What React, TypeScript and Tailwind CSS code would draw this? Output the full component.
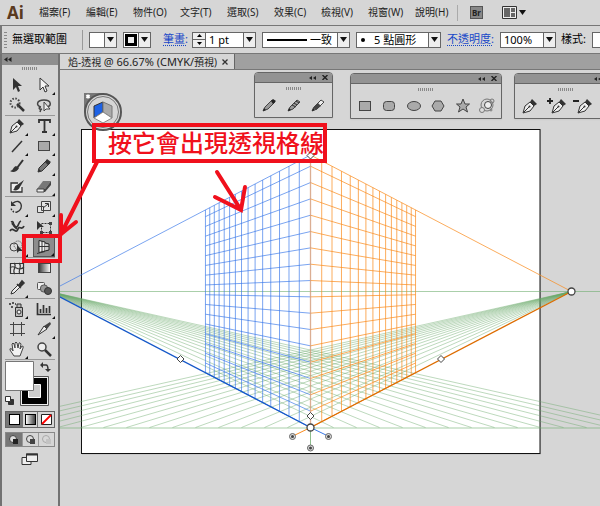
import React, { useState } from 'react';

const LEFT_VP = 49.5;
const RIGHT_VP = 571.5;
const HORIZON = 291.5;
const CENTER = 310.5;
const GROUND = 427.5;

const menus = ['檔案(F)', '編輯(E)', '物件(O)', '文字(T)', '選取(S)', '效果(C)', '檢視(V)', '視窗(W)', '說明(H)'];

interface ToolItem {
  name: string;
  more?: boolean;
  icon: React.ReactNode;
}

const penNib = (
  <>
    <path d="M2 16 L4 9 L9 5 L13 9 L9 14 Z M2.500 15.500 L8 10" fill="#eee" stroke="#333" />
    <circle cx="8.500" cy="9.500" r="1" fill="#333" />
    <path d="M9 5 L11 2 L16 7 L13 9 Z" fill="#333" />
  </>
);

const toolGroups: ToolItem[][] = [
  [
    { name: 'Selection', icon: <path d="M5 2 L5 14 L8 11 L10 16 L12 15 L10 10 L14 10 Z" fill="#333" /> },
    { name: 'Direct Selection', more: true, icon: <path d="M5 2 L5 14 L8 11 L10 16 L12 15 L10 10 L14 10 Z" fill="#f4f4f4" stroke="#333" /> },
    {
      name: 'Magic Wand',
      icon: (
        <>
          <path d="M9 8 L16 15" stroke="#333" strokeWidth="2.500" />
          <circle cx="7" cy="7" r="4.500" fill="none" stroke="#444" strokeWidth="2" strokeDasharray="1.500 1.500" />
        </>
      ),
    },
    {
      name: 'Lasso',
      icon: (
        <>
          <path d="M6 11 C1 10 1 4 9 4 C17 4 17 11 11 11 M6 11 C3 11 4 14 7 13 M6 13 L5 16" fill="none" stroke="#444" strokeWidth="1.500" />
          <path d="M9 6 L9 15 L11 13 L15 13 Z" fill="#eee" stroke="#444" />
        </>
      ),
    },
  ],
  [
    { name: 'Pen', more: true, icon: penNib },
    { name: 'Type', more: true, icon: <path d="M4 6 V3 H15 V6 M9.500 3 V15 M7 15 H12" fill="none" stroke="#333" strokeWidth="1.800" /> },
    { name: 'Line', more: true, icon: <path d="M4 15 L14 4" stroke="#333" strokeWidth="1.500" /> },
    { name: 'Rectangle', more: true, icon: <rect x="3.500" y="4.500" width="11" height="9" fill="#aaa" stroke="#444" /> },
    {
      name: 'Paintbrush',
      icon: (
        <>
          <path d="M15 3 L9 11" stroke="#333" strokeWidth="2" />
          <path d="M2 14 C5 14 5 10 8 9 L11 11 C9 15 5 16 2 14 Z" fill="#333" />
        </>
      ),
    },
    {
      name: 'Pencil',
      more: true,
      icon: (
        <>
          <path d="M3 15 L4 11 L12 3 L15 6 L7 14 Z" fill="#777" stroke="#333" />
          <path d="M10 5 L12 2 L16 5 L13 8 Z M3 15 L4 12 L6 14 Z" fill="#333" />
        </>
      ),
    },
    {
      name: 'Blob Brush',
      icon: (
        <>
          <path d="M10 6 H3 V15 H14 V10" fill="#eee" stroke="#333" strokeWidth="1.300" />
          <path d="M5 13 C7 12 6 9 9 8 L16 3 L12 10 C11 13 8 14 5 13 Z" fill="#333" />
        </>
      ),
    },
    {
      name: 'Eraser',
      more: true,
      icon: (
        <>
          <path d="M2 12 L8 4 H16 L10 12 Z" fill="#777" />
          <path d="M2 12 H10 L16 4 V8 L10 15 H2 Z" fill="#444" />
          <path d="M2 12 H9 V15 H2 Z" fill="#eee" stroke="#444" />
        </>
      ),
    },
  ],
  [
    {
      name: 'Rotate',
      more: true,
      icon: (
        <>
          <path d="M5 5 C13 -1 17 11 9 14" fill="none" stroke="#333" strokeWidth="1.400" />
          <path d="M9 14 C5 15 3 12 3 9" fill="none" stroke="#333" strokeWidth="1.500" strokeDasharray="1.500 1.500" />
          <path d="M3 3 V8 H8 Z" fill="#333" />
        </>
      ),
    },
    {
      name: 'Scale',
      more: true,
      icon: (
        <>
          <path d="M6.500 3.500 H15.500 V12.500 H6.500 Z M2.500 8.500 H8.500 V14.500 H2.500 Z" fill="#e4e4e4" stroke="#444" />
          <path d="M8 10 L13 6 M10 5.500 H13.500 V9" fill="none" stroke="#333" />
        </>
      ),
    },
    {
      name: 'Width',
      more: true,
      icon: (
        <>
          <path d="M2 13 C5 8 8 17 10 11 C11 7 14 13 16 8 M3 4 C7 2 4 9 8 9 C11 9 10 4 13 3" fill="none" stroke="#333" strokeWidth="1.700" />
          <path d="M4 5 L9 11" stroke="#333" strokeWidth="2" />
        </>
      ),
    },
    {
      name: 'Free Transform',
      icon: (
        <>
          <path d="M6.500 5.500 H15.500 V14.500 H6.500 Z" fill="none" stroke="#333" strokeDasharray="2 1" />
          <path d="M2 3 V12 L5 9 L9 9 Z" fill="#333" />
          <path d="M14 4 h3 v3 h-3 Z M14 13 h3 v3 h-3 Z M5 13 h3 v3 h-3 Z" fill="#444" />
        </>
      ),
    },
    {
      name: 'Shape Builder',
      more: true,
      icon: (
        <>
          <circle cx="6" cy="9" r="4" fill="#ddd" stroke="#444" />
          <circle cx="10" cy="7" r="4" fill="none" stroke="#444" strokeDasharray="1 1" />
          <path d="M9 7 V15 L11 13 H15 Z" fill="#333" />
        </>
      ),
    },
    {
      name: 'Perspective Grid',
      more: true,
      icon: (
        <>
          <path d="M4 2.500 L10 4 V13 L4 14.500 Z" fill="#f2f2f2" stroke="#222" />
          <path d="M10 5 L14 6 V12 L10 13" fill="#ccc" stroke="#222" />
          <path d="M4 8.500 H14 M7 3 V14 M2 15.500 L10 13.500" fill="none" stroke="#333" />
        </>
      ),
    },
  ],
  [
    {
      name: 'Mesh',
      icon: (
        <path
          d="M2.500 4.500 H15.500 V14.500 H2.500 Z M2 9 C6 4 10 14 16 8 M6 4 C10 8 3 11 7 15 M11 4 C15 8 9 11 12 15"
          fill="#e4e4e4"
          stroke="#333"
          strokeWidth="1.200"
        />
      ),
    },
    { name: 'Gradient', icon: <rect x="3.500" y="4.500" width="12" height="9" fill="url(#gradTool)" stroke="#444" /> },
    {
      name: 'Eyedropper',
      more: true,
      icon: (
        <>
          <path d="M3 15 L4 12 L10 6 L12 8 L6 14 Z" fill="#eee" stroke="#333" />
          <path d="M9 5 L13 9 M11 6 L14 2 L16 4 L12 8 Z" fill="#333" stroke="#333" strokeWidth="1.500" />
        </>
      ),
    },
    {
      name: 'Blend',
      icon: (
        <>
          <rect x="2.500" y="3.500" width="7" height="7" rx="1" fill="#eee" stroke="#555" />
          <rect x="5.500" y="6" width="7" height="7" rx="3" fill="#999" stroke="#555" />
          <circle cx="13" cy="12" r="3.500" fill="#555" stroke="#333" />
        </>
      ),
    },
  ],
  [
    {
      name: 'Symbol Sprayer',
      more: true,
      icon: (
        <>
          <path d="M7.500 7.500 H14.500 V16.500 H7.500 Z M9 7 V4 H13 V7" fill="#bbb" stroke="#333" />
          <circle cx="11" cy="12" r="2" fill="#eee" stroke="#333" />
          <path d="M1 3 h2 v2 h-2 Z M4 2 h2 v2 h-2 Z M3 6 h2 v2 h-2 Z M7 3 h1 v2 h-1 Z" fill="#555" />
        </>
      ),
    },
    { name: 'Column Graph', more: true, icon: <path d="M2.500 3 V14.500 H16 M5.500 13 V9 M8.500 13 V5 M11.500 13 V8 M14.500 13 V6" fill="none" stroke="#333" strokeWidth="1.700" /> },
    { name: 'Artboard', icon: <path d="M5.500 2 V16 M13.500 2 V16 M2 4.500 H17 M2 13.500 H17" fill="none" stroke="#444" /> },
    {
      name: 'Slice',
      more: true,
      icon: (
        <>
          <path d="M3 15 L9 6 L12 9 Z" fill="#eee" stroke="#333" />
          <path d="M9 6 L15 2 L16 4 L12 9 Z" fill="#444" />
        </>
      ),
    },
    {
      name: 'Hand',
      more: true,
      icon: (
        <path
          d="M6 16 L2 10 Q1 8 4 9 L5 11 L4 4 Q5 2 6 4 L7 8 L7 3 Q8 1 9 3 L10 8 L11 3 Q12 2 13 4 L12 9 L14 6 Q16 6 15 8 L12 16 Z"
          fill="#f2f2f2"
          stroke="#444"
        />
      ),
    },
    {
      name: 'Zoom',
      icon: (
        <>
          <circle cx="7" cy="7" r="4" fill="#eee" stroke="#444" strokeWidth="1.500" />
          <path d="M10 10 L16 16" stroke="#333" strokeWidth="2.500" />
        </>
      ),
    },
  ],
];

function Grip() {
  return <div className="h-[3px] w-4 bg-[repeating-linear-gradient(90deg,#888_0_1px,#d6d6d6_1px_2px)]" />;
}

function Caret() {
  return (
    <svg width="7" height="5" viewBox="0 0 7 5">
      <path d="M0 0 H7 L3.500 5 Z" fill="#111" />
    </svg>
  );
}

interface ComboProps {
  label: string;
  className: string;
  value?: string;
  id?: string;
  selectClass?: string;
  children?: React.ReactNode;
}

function Combo({ label, className, value = '', id, selectClass = 'pl-1', children }: ComboProps) {
  return (
    <div className={`relative h-4 shrink-0 border border-[#666] bg-white ${className}`}>
      <select
        id={id}
        aria-label={id ? undefined : label}
        className={`block h-full w-full appearance-none bg-transparent pr-3 leading-[14px] outline-none ${selectClass}`}
      >
        <option>{value}</option>
      </select>
      {children}
      <span className="pointer-events-none absolute inset-y-0 right-0 flex w-3 items-center justify-center border-l border-[#666] bg-[#eee]">
        <Caret />
      </span>
    </div>
  );
}

function ToolButton({ tool, active, onClick }: { tool: ToolItem; active: boolean; onClick: () => void }) {
  return (
    <button
      aria-label={tool.name}
      onClick={onClick}
      className={`relative flex h-5 w-[22px] items-center justify-center ${active ? 'border border-[#555] bg-[#8c8c8c]' : ''}`}
    >
      <svg width="18" height="18" viewBox="0 0 18 18">
        {tool.icon}
      </svg>
      {tool.more && (
        <svg className="absolute right-0 bottom-0" width="3" height="3" viewBox="0 0 3 3">
          <path d="M3 0 V3 H0 Z" fill="#111" />
        </svg>
      )}
    </button>
  );
}

function Toolbox() {
  const [active, setActive] = useState('Perspective Grid');

  return (
    <aside className="w-[60px] shrink-0 border-r-2 border-l-2 border-[#727272] bg-[#d6d6d6]">
      <div className="flex h-[11px] items-center bg-[#8f8f8f] pl-0.5">
        <button aria-label="Collapse tools">
          <svg width="8" height="5" viewBox="0 0 8 5">
            <path d="M3.500 0 V5 L0 2.500 Z M7.500 0 V5 L4 2.500 Z" fill="#222" />
          </svg>
        </button>
      </div>
      <div className="flex h-2.5 items-start justify-center pt-0.5">
        <Grip />
      </div>
      <div className="mx-[3px]">
        {toolGroups.map((group, i) => (
          <div key={i} className="grid grid-cols-2 justify-items-center gap-x-1 border-b border-[#999]">
            {group.map((tool) => (
              <ToolButton key={tool.name} tool={tool} active={active === tool.name} onClick={() => setActive(tool.name)} />
            ))}
          </div>
        ))}
      </div>

      {/* Fill and stroke */}
      <div className="mx-[3px] mt-px">
        <svg className="block" width="50" height="46" viewBox="0 0 50 46">
          <path d="M15.500 15.500 H43.500 V44.500 H15.500 Z" fill="#eee" stroke="#555" />
          <path d="M17 17 H42 V43 H17 Z" fill="#000" />
          <path d="M23.500 23.500 H35.500 V36.500 H23.500 Z" fill="#ccc" stroke="#fff" />
          <path d="M0.500 0.500 H28.500 V29.500 H0.500 Z" fill="#fff" stroke="#777" />
          <path d="M37 4 H41 Q43 4 43 9" fill="none" stroke="#333" strokeWidth="1.500" />
          <path d="M38 1 V7 L35 4 Z M40 8 H46 L43 11 Z" fill="#333" />
          <path d="M3.500 38.500 H8.500 V43.500 H3.500 Z" fill="#333" stroke="#333" />
          <path d="M0.500 35.500 H5.500 V40.500 H0.500 Z" fill="#fff" stroke="#333" />
        </svg>
      </div>
      <div className="mx-[3px] mt-1 grid grid-cols-3 border border-[#666]">
        <button aria-label="Color" className="flex h-[15px] items-center justify-center bg-[#777]">
          <span className="size-[11px] border border-black bg-white" />
        </button>
        <button aria-label="Gradient fill" className="flex h-[15px] items-center justify-center border-x border-[#777]">
          <span className="size-[11px] border border-black bg-linear-to-r from-white to-[#444]" />
        </button>
        <button aria-label="None" className="flex h-[15px] items-center justify-center">
          <svg width="11" height="11" viewBox="0 0 11 11">
            <path d="M0.500 0.500 H10.500 V10.500 H0.500 Z" fill="#fff" stroke="#222" />
            <path d="M1 10 L10 1" stroke="#f00" strokeWidth="1.800" />
          </svg>
        </button>
      </div>
      <div className="mx-[3px] mt-1 grid grid-cols-3 border border-[#888]">
        {['Draw Normal', 'Draw Behind', 'Draw Inside'].map((name, i) => (
          <button key={name} aria-label={name} className={`flex h-[13px] items-center justify-center ${i === 0 ? 'bg-[#777]' : 'border-l border-[#999]'}`}>
            <svg width="10" height="10" viewBox="0 0 10 10" opacity={i === 2 ? 0.3 : 1}>
              <circle cx="4" cy="4" r="3.500" fill="#ddd" stroke="#444" />
              <path d="M4 4 H9 V9 H4 Z" fill={i === 0 ? '#222' : i === 1 ? '#444' : '#999'} />
            </svg>
          </button>
        ))}
      </div>
      <button aria-label="Screen mode" className="mx-auto mt-1.5 block">
        <svg width="18" height="13" viewBox="0 0 18 13">
          <path d="M1 4.500 H10 V11.500 H1 Z" fill="#eee" stroke="#333" />
          <path d="M5.500 1 H16.500 V8.500 H5.500 Z" fill="#eee" stroke="#333" />
          <path d="M5 1.500 H17" stroke="#333" strokeWidth="2" />
        </svg>
      </button>
    </aside>
  );
}

function FloatingPanel({ className, children }: { className: string; children: React.ReactNode }) {
  return (
    <div className={`absolute h-[46px] overflow-hidden rounded-t-sm border border-[#666] bg-[#d6d6d6] shadow-xs ${className}`}>
      <div className="flex h-2.5 items-center justify-end gap-1.5 border-b border-[#666] bg-[#939393] pr-1">
        <button aria-label="Collapse">
          <svg className="block" width="7" height="4" viewBox="0 0 7 4">
            <path d="M3 0 V4 L0 2 Z M7 0 V4 L4 2 Z" fill="#222" />
          </svg>
        </button>
        <button aria-label="Close">
          <svg className="block" width="6" height="5" viewBox="0 0 6 5">
            <path d="M0.500 0 L5.500 5 M5.500 0 L0.500 5" stroke="#222" strokeWidth="1.400" />
          </svg>
        </button>
      </div>
      <div className="flex justify-center pt-1">
        <Grip />
      </div>
      {children}
    </div>
  );
}

const shapeIcons = [
  <rect x="2.500" y="4.500" width="11" height="9" />,
  <rect x="2.500" y="4.500" width="11" height="9" rx="3" />,
  <ellipse cx="8" cy="9" rx="6.500" ry="4.500" />,
  <path d="M5 4 H11 L14 9 L11 14 H5 L2 9 Z" />,
  <path d="M8 2 L10 7 L14.500 7 L11 10 L12.500 15 L8 12 L3.500 15 L5 10 L1.500 7 L6 7 Z" />,
  <g fill="none" stroke="#777">
    <circle cx="8" cy="8" r="6" />
    <circle cx="9" cy="8" r="3.500" fill="#eee" stroke="#444" />
    <circle cx="3" cy="13" r="2.500" fill="#ddd" />
    <circle cx="13" cy="4" r="2" />
    <circle cx="12" cy="13" r="1" />
  </g>,
];

function Canvas() {
  const columns = Array.from({ length: 15 }, (_, i) => 261 / (1 + 0.0449 * (i + 1)));
  const rows = Array.from({ length: 17 }, (_, i) => 427.5 - i * 16.33);
  const ground = Array.from({ length: 15 }, (_, i) => (i + 1) * 23);
  // share of the way from the centre edge to a vanishing point that the walls cover
  const wall = 105 / 261;
  const wallY = (y: number) => y + (HORIZON - y) * wall;
  const wallTop = 155;

  return (
    <svg className="block shrink-0" width="540" height="436" viewBox="60 70 540 436">
      <rect x="82" y="129.500" width="459" height="325" fill="#bbb" />
      <rect x="81.500" y="129.500" width="458.500" height="324" fill="#fff" stroke="#111" />

      <g stroke="#67a867" strokeOpacity="0.550" strokeWidth="0.800" fill="none">
        <path d={`M60 ${HORIZON} H600 M60 ${GROUND + 0.5} H600`} strokeOpacity="0.700" />
        {ground.map((d) => (
          <path key={d} d={`M${RIGHT_VP} ${HORIZON} L${CENTER - d} ${GROUND} M${LEFT_VP} ${HORIZON} L${CENTER + d} ${GROUND}`} />
        ))}
      </g>

      {/* Left wall */}
      <g stroke="#3878e8" strokeOpacity="0.750" strokeWidth="0.900" fill="none">
        {columns.map((d) => {
          const x = LEFT_VP + d;
          const share = 1 - d / 261;
          return <path key={d} d={`M${x} ${wallTop + (HORIZON - wallTop) * share} V${GROUND + (HORIZON - GROUND) * share}`} />;
        })}
        {rows.map((y) => (
          <path key={y} d={`M${CENTER} ${y} L${CENTER - 105} ${wallY(y)}`} />
        ))}
        <path d={`M${CENTER} ${wallTop} L${LEFT_VP} ${HORIZON}`} />
        <path d={`M${CENTER} ${GROUND} L${LEFT_VP} ${HORIZON}`} stroke="#1558c8" strokeOpacity="1" strokeWidth="1.300" />
      </g>

      {/* Right wall */}
      <g stroke="#f98b1d" strokeOpacity="0.800" strokeWidth="0.900" fill="none">
        {columns.map((d) => {
          const x = RIGHT_VP - d;
          const share = 1 - d / 261;
          return <path key={d} d={`M${x} ${wallTop + (HORIZON - wallTop) * share} V${GROUND + (HORIZON - GROUND) * share}`} />;
        })}
        {rows.map((y) => (
          <path key={y} d={`M${CENTER} ${y} L${CENTER + 105} ${wallY(y)}`} />
        ))}
        <path d={`M${CENTER} ${wallTop} L${RIGHT_VP} ${HORIZON}`} />
        <path d={`M${CENTER} ${GROUND} L${RIGHT_VP} ${HORIZON}`} stroke="#dd6c00" strokeOpacity="1" strokeWidth="1.300" />
        <path d={`M${CENTER} ${wallTop} V${GROUND}`} stroke="#d29a78" strokeWidth="1.300" />
      </g>

      {/* Grid handles */}
      <path d="M310.500 427.500 L293 436" stroke="#f98b1d" />
      <path d="M310.500 427.500 L328 436" stroke="#3878e8" />
      <path d="M310.500 427.500 V448" stroke="#8dbd8d" />
      <g fill="#fff" stroke="#444">
        <circle cx="310.500" cy="427.500" r="3.500" strokeWidth="1.300" />
        <circle cx="571.500" cy="291.500" r="3.500" strokeWidth="1.300" />
        <path d="M310.500 152 L314 155.500 L310.500 159 L307 155.500 Z" />
        <path d="M310.500 412.500 L314 416 L310.500 419.500 L307 416 Z" />
        <path d="M180.500 355.500 L184 359 L180.500 362.500 L177 359 Z" />
        <path d="M441 355.500 L444.500 359 L441 362.500 L437.500 359 Z" />
      </g>
      {[[292.5, 436.5], [328.5, 436.5], [310.5, 448]].map(([x, y]) => (
        <g key={x}>
          <circle cx={x} cy={y} r="3" fill="#ddd" stroke="#666" />
          <circle cx={x} cy={y} r="1.500" fill="#444" />
        </g>
      ))}
    </svg>
  );
}

export default function App() {
  return (
    <div className="relative flex min-h-screen flex-col overflow-hidden bg-[#d6d6d6] font-['Noto_Sans','Noto_Sans_CJK_TC',sans-serif] text-[11px] text-[#222]">
      <svg className="absolute" width="0" height="0">
        <defs>
          <linearGradient id="gradTool">
            <stop offset="0" stopColor="#333" />
            <stop offset="1" stopColor="#fff" />
          </linearGradient>
        </defs>
      </svg>

      {/* Menu bar */}
      <header className="flex h-[26px] items-center border-b border-[#777] pl-[7px] whitespace-nowrap">
        <span className="w-8 shrink-0 text-[17px] leading-5 font-bold text-[#5a3a20]">Ai</span>
        <nav className="flex gap-[15px] text-[10px]">
          {menus.map((menu) => (
            <button key={menu} className="w-8 text-left whitespace-nowrap">
              {menu}
            </button>
          ))}
        </nav>
        <div className="ml-2.5 h-4 w-px bg-[#aaa]" />
        <button className="ml-3 h-[13px] w-[13px] border border-[#555] bg-[#888] text-[8px] leading-[11px] font-bold text-[#222]">Br</button>
        <button aria-label="Arrange documents" className="ml-[19px] flex items-center gap-0.5">
          <svg width="15" height="13" viewBox="0 0 15 13">
            <path d="M0.500 0.500 H14.500 V12.500 H0.500 Z" fill="#eee" stroke="#333" />
            <path d="M2 2 H8 V11 H2 Z M9 2 H13 V6 H9 Z M9 7 H13 V11 H9 Z" fill="#666" />
          </svg>
          <Caret />
        </button>
      </header>

      {/* Control bar */}
      <div className="flex h-7 items-center border-b border-l-2 border-[#777] whitespace-nowrap text-black">
        <div className="ml-0.5 h-4 w-[3px] shrink-0 bg-[repeating-linear-gradient(#888_0_1px,#d6d6d6_1px_3px)]" />
        <span className="ml-[5px] w-[70px] shrink-0">無選取範圍</span>
        <div className="h-5 w-px shrink-0 bg-[#999]" />
        <Combo label="Fill" className="ml-1.5 w-7" />
        <Combo label="Stroke" className="ml-1.5 w-7">
          <span className="pointer-events-none absolute top-px left-px size-3 border-[3px] border-black bg-[#eee]" />
        </Combo>
        <label htmlFor="stroke" className="ml-3 w-[29px] shrink-0 text-[#1848c8] underline decoration-dotted underline-offset-2">
          筆畫:
        </label>
        <div className="flex h-4 w-[13px] shrink-0 flex-col border border-r-0 border-[#666] bg-[#eee]">
          <button aria-label="Increase stroke" className="flex flex-1 items-center justify-center border-b border-[#666]">
            <svg width="5" height="3" viewBox="0 0 5 3">
              <path d="M0 3 H5 L2.500 0 Z" />
            </svg>
          </button>
          <button aria-label="Decrease stroke" className="flex flex-1 items-center justify-center">
            <svg width="5" height="3" viewBox="0 0 5 3">
              <path d="M0 0 H5 L2.500 3 Z" />
            </svg>
          </button>
        </div>
        <Combo id="stroke" label="Stroke weight" value="1 pt" className="w-[51px]" selectClass="pl-[3px]" />
        <Combo label="Profile" value="一致" className="ml-1.5 w-[88px]" selectClass="pl-[47px]">
          <span className="pointer-events-none absolute top-[6px] left-1 h-0.5 w-10 bg-black" />
        </Combo>
        <Combo label="Brush" value="5 點圓形" className="ml-1.5 w-[85px]" selectClass="pl-[17px]">
          <span className="pointer-events-none absolute top-[5px] left-1 size-1 rounded-full bg-black" />
        </Combo>
        <label htmlFor="opacity" className="ml-1.5 w-[53px] shrink-0 text-[#1848c8] underline decoration-dotted underline-offset-2">
          不透明度:
        </label>
        <Combo id="opacity" label="Opacity" value="100%" className="w-14" selectClass="pl-[3px]" />
        <label htmlFor="style" className="ml-[5px] w-[31px] shrink-0">
          樣式:
        </label>
        <Combo id="style" label="Style" className="w-10" />
      </div>

      <div className="flex flex-1">
        <Toolbox />
        <main className="flex min-w-0 flex-1 flex-col">
          <div className="flex h-4 border-b border-[#777] bg-[#a0a0a0]">
            <div className="flex w-[175px] items-center justify-between border-r border-[#666] bg-[#d6d6d6] pr-1.5 pl-2 text-[10px] leading-[15px] whitespace-nowrap">
              <span>
                焰-透視 <span className="text-[11px]">@ 66.67% (CMYK/</span>預視)
              </span>
              <button aria-label="Close tab">
                <svg className="block" width="6" height="6" viewBox="0 0 6 6">
                  <path d="M0.500 0.500 L5.500 5.500 M5.500 0.500 L0.500 5.500" stroke="#333" strokeWidth="1.300" />
                </svg>
              </button>
            </div>
          </div>

          <div className="relative flex-1 overflow-hidden">
            <Canvas />

            {/* Plane switcher */}
            <button aria-label="Active plane" className="absolute top-[22px] left-[23px]">
              <svg className="block" width="40" height="40" viewBox="0 0 40 40">
                <path d="M1 1 H20 L1 20 Z" fill="#777" />
                <circle cx="20" cy="20" r="18" fill="#d6d6d6" stroke="#555" strokeWidth="2" />
                <circle cx="20" cy="20" r="15.500" fill="#d6d6d6" stroke="#777" />
                <path d="M11 14 L20 10 V20 L11 26 Z" fill="#1d62e6" stroke="#333" />
                <path d="M20 10 L29 14 V26 L20 20 Z" fill="#aaa" stroke="#777" />
                <path d="M11 26 L20 20 L29 26 L20 31 Z" fill="#fff" stroke="#888" />
                <path d="M3.500 3 L6.500 6 M6.500 3 L3.500 6" stroke="#fff" strokeWidth="2" />
              </svg>
            </button>

            <FloatingPanel className="top-0.5 left-[194px] w-[79px]">
              <div className="flex justify-between px-1.5 pt-1.5">
                {['Pencil', 'Smooth', 'Path Eraser'].map((name, i) => (
                  <button key={name} aria-label={name}>
                    <svg className="block" width="16" height="18" viewBox="0 0 16 18">
                      <path d="M2 15 L4 11 L11 4 L14 6 L7 13 Z" fill={i === 2 ? '#eee' : '#999'} stroke="#444" />
                      {i === 0 && <path d="M10 5 L12 3 L15 5 L12 8 Z" fill="#222" />}
                      {i === 1 && <path d="M6 9 L10 11 M8 7 L11 9 M10 5 L13 7" stroke="#333" />}
                      {i === 2 && <path d="M3 12 L8 7 L11 10 L6 14 Z" fill="#444" />}
                      <path d="M2 15 L3 12 L5 14 Z" fill="#222" />
                    </svg>
                  </button>
                ))}
              </div>
            </FloatingPanel>
            <FloatingPanel className="top-[3px] left-[290px] w-[152px]">
              <div className="flex justify-between px-1.5 pt-1.5">
                {shapeIcons.map((icon, i) => (
                  <button key={i} aria-label={`Shape ${i + 1}`}>
                    <svg className="block" width="16" height="18" viewBox="0 0 16 18" fill="#aaa" stroke="#444">
                      {icon}
                    </svg>
                  </button>
                ))}
              </div>
            </FloatingPanel>
            <FloatingPanel className="top-[3px] left-[454px] w-[104px]">
              <div className="flex gap-1.5 px-1.5 pt-1.5">
                {['', 'M0 4 H6 M3 1 V7', 'M0 4 H6', ''].map((mark, i) => (
                  <button key={i} aria-label={`Pen ${i + 1}`}>
                    <svg className="block" width="20" height="18" viewBox="0 0 20 18">
                      {i < 3 ? <g transform={i ? 'translate(3 0)' : undefined}>{penNib}</g> : <path d="M6 3 H13 V14 H6 Z" fill="#333" />}
                      <path d={mark} stroke="#222" strokeWidth="1.800" />
                    </svg>
                  </button>
                ))}
              </div>
            </FloatingPanel>
          </div>
        </main>
      </div>

      {/* Callout */}
      <svg className="pointer-events-none absolute top-0 left-0" width="340" height="280" viewBox="0 0 340 280" fill="none" stroke="#f0101c" strokeWidth="4">
        <path d="M24 236 H60 V261 H24 Z" />
        <path d="M97 162 L61 234 M61 215 V234 L76 222" strokeLinecap="round" />
        <path d="M217 172 L241 210 M215 197 L241 210 L245 187" strokeLinecap="round" />
      </svg>
      <p className="absolute top-[123px] left-[92px] h-10 w-[235px] border-4 border-[#f0101c] pl-3 text-[24px] leading-8 font-medium whitespace-nowrap text-[#f0101c]">
        按它會出現透視格線
      </p>
    </div>
  );
}
